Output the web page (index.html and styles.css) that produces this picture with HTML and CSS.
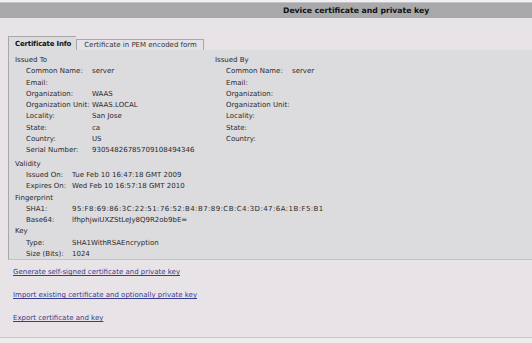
FILE: index.html
```html
<html>
  <head>
    <title>Device certificate and private key</title>
    <meta name="viewport" content="width=device-width, initial-scale=1">
    <link rel="stylesheet" href="styles.css">
  </head>
  <body>
    <div class="topline"></div>
    <div class="header">Device certificate and private key</div>
    <div class="tabs">
      <div class="tab active">Certificate Info</div>
      <div class="tab">Certificate in PEM encoded form</div>
    </div>
    <div class="panel">
      <div class="cols">
        <div class="col">
          <div class="group">Issued To</div>
          <div class="rows">
            <span>Common Name:</span><span>server</span>
            <span>Email:</span><span></span>
            <span>Organization:</span><span>WAAS</span>
            <span>Organization Unit:</span><span>WAAS.LOCAL</span>
            <span>Locality:</span><span>San Jose</span>
            <span>State:</span><span>ca</span>
            <span>Country:</span><span>US</span>
            <span>Serial Number:</span><span>93054826785709108494346</span>
          </div>
        </div>
        <div class="col">
          <div class="group">Issued By</div>
          <div class="rows">
            <span>Common Name:</span><span>server</span>
            <span>Email:</span><span></span>
            <span>Organization:</span><span></span>
            <span>Organization Unit:</span><span></span>
            <span>Locality:</span><span></span>
            <span>State:</span><span></span>
            <span>Country:</span><span></span>
          </div>
        </div>
      </div>
      <div class="group">Validity</div>
      <div class="rows short">
        <span>Issued On:</span><span>Tue Feb 10 16:47:18 GMT 2009</span>
        <span>Expires On:</span><span>Wed Feb 10 16:57:18 GMT 2010</span>
      </div>
      <div class="group">Fingerprint</div>
      <div class="rows short">
        <span>SHA1:</span><span class="hex">95:F8:69:86:3C:22:51:76:52:B4:B7:89:CB:C4:3D:47:6A:1B:F5:B1</span>
        <span>Base64:</span><span>lfhphjwiUXZStLeJy8Q9R2ob9bE=</span>
      </div>
      <div class="group">Key</div>
      <div class="rows short">
        <span>Type:</span><span>SHA1WithRSAEncryption</span>
        <span>Size (Bits):</span><span>1024</span>
      </div>
    </div>
    <div class="links">
      <a href="#">Generate self-signed certificate and private key</a>
      <a href="#">Import existing certificate and optionally private key</a>
      <a href="#">Export certificate and key</a>
    </div>
    <div class="footer"></div>
  </body>
</html>
```

FILE: styles.css
```css
body {
  margin: 0;
  padding: 0;
  background: #e7e3e7;
  font-family: "DejaVu Sans", Verdana, sans-serif;
  font-size: 7px;
  color: #2a2a2a;
  overflow: hidden;
}
.topline {
  height: 2px;
  border-bottom: 1px solid #c4c4c8;
  background: #f2f0f2;
}
.header {
  height: 15px;
  line-height: 15px;
  background: #a9a9ab;
  font-weight: bold;
  font-size: 7.7px;
  color: #111;
  padding-left: 283px;
}
.tabs {
  display: flex;
  align-items: flex-end;
  padding: 19px 0 0 8px;
  height: 13px;
}
.tab {
  height: 10px;
  line-height: 10px;
  padding: 0 6px 0 7px;
  border: 1px solid #a8a8a8;
  border-bottom: none;
  background: #e4e2e6;
  color: #333;
}
.tab.active {
  height: 13px;
  line-height: 15px;
  padding: 0 5px 0 6px;
  background: #dcdbde;
  border-right: none;
  font-weight: bold;
  letter-spacing: -0.2px;
  color: #111;
}
.panel {
  margin-left: 8px;
  background: #dcdbde;
  border-left: 1px solid #a8a8a8;
  border-bottom: 1px solid #c2c2c4;
  padding: 5px 0 0 6px;
  height: 204px;
}
.cols {
  display: grid;
  grid-template-columns: 200px 1fr;
  padding-bottom: 2px;
}
.group {
  line-height: 11.3px;
}
.rows {
  display: grid;
  grid-template-columns: 66px 1fr;
  padding-left: 11px;
  line-height: 11.3px;
}
.rows.short {
  grid-template-columns: 46px 1fr;
}
.hex {
  letter-spacing: 0.43px;
}
.links {
  display: flex;
  flex-direction: column;
  gap: 14px;
  padding: 8px 0 0 13px;
  height: 69px;
}
.links a {
  color: #3a3a90;
  line-height: 9px;
}
.footer {
  border-top: 1px solid #c8c8cc;
  height: 5px;
  background: #ecebee;
}
```
